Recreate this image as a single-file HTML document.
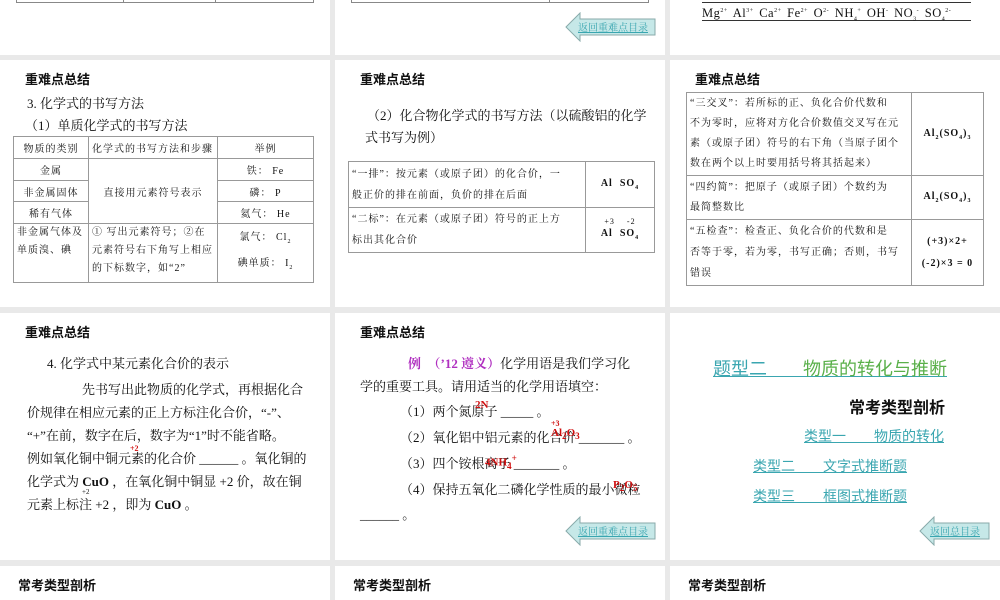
<!DOCTYPE html>
<html><head><meta charset="utf-8"><style>
body{margin:0;width:1000px;height:600px;background:#e9e9e9;position:relative;overflow:hidden;font-family:"Liberation Serif","Noto Serif CJK SC",serif;color:#111}
.s{position:absolute;background:#fff;overflow:hidden}
.a{position:absolute;white-space:nowrap}
.h{font-family:"Liberation Sans","Noto Sans CJK SC",sans-serif;font-weight:bold;font-size:13px}
.t13{font-size:13px}
table{position:absolute;border-collapse:collapse;font-size:10px;font-family:"Liberation Serif","Noto Serif CJK SC",serif}
td{border:1px solid #999;padding:0 3px;vertical-align:middle;white-space:nowrap}
.ls{letter-spacing:1px}
.red{color:#d01010;font-weight:bold}
.lk{color:#3aa6b0;text-decoration:underline}
</style></head><body>

<!-- top row -->
<div class="s" style="left:0;top:0;width:330px;height:55px">
 <div class="a" style="left:16px;top:0;width:297px;height:2px;border-bottom:1px solid #888"></div>
 <div class="a" style="left:16px;top:0;width:0;height:3px;border-left:1px solid #888"></div>
 <div class="a" style="left:123px;top:0;height:3px;border-left:1px solid #888"></div>
 <div class="a" style="left:215px;top:0;height:3px;border-left:1px solid #888"></div>
 <div class="a" style="left:313px;top:0;height:3px;border-left:1px solid #888"></div>
</div>
<div class="s" style="left:335px;top:0;width:330px;height:55px">
 <div class="a" style="left:16px;top:0;width:297px;height:2px;border-bottom:1px solid #888"></div>
 <div class="a" style="left:16px;top:0;height:3px;border-left:1px solid #888"></div>
 <div class="a" style="left:214px;top:0;height:3px;border-left:1px solid #888"></div>
 <div class="a" style="left:313px;top:0;height:3px;border-left:1px solid #888"></div>
 <svg class="a" style="left:230px;top:12px" width="92" height="30"><polygon points="1,15 15,1 15,7 90,7 90,23 15,23 15,29" fill="#c6e8e8" stroke="#8aa" stroke-width="1"/></svg>
 <div class="a lk" style="left:243px;top:19px;font-size:10px">返回重难点目录</div>
</div>
<div class="s" style="left:670px;top:0;width:330px;height:55px">
 <div class="a" style="left:32px;top:2px;width:269px;height:17px;border-top:1px solid #333;border-bottom:1px solid #333;font-size:12.5px;line-height:17px;letter-spacing:0.5px;word-spacing:2px">Mg<sup style="font-size:6px">2+</sup> Al<sup style="font-size:6px">3+</sup> Ca<sup style="font-size:6px">2+</sup> Fe<sup style="font-size:6px">2+</sup> O<sup style="font-size:6px">2-</sup> NH<sub style="font-size:6px">4</sub><sup style="font-size:6px">+</sup> OH<sup style="font-size:6px">-</sup> NO<sub style="font-size:6px">3</sub><sup style="font-size:6px">-</sup> SO<sub style="font-size:6px">4</sub><sup style="font-size:6px">2-</sup></div>
</div>

<!-- row 2 -->
<div class="s" style="left:0;top:60px;width:330px;height:247px">
 <div class="a h" style="left:25px;top:9px">重难点总结</div>
 <div class="a t13" style="left:27px;top:33px">3. 化学式的书写方法</div>
 <div class="a t13" style="left:25px;top:55px">（1）单质化学式的书写方法</div>
 <table class="ls" style="left:13px;top:76px;width:301px">
  <tr style="height:22px"><td style="width:68px;text-align:center">物质的类别</td><td style="width:122px">化学式的书写方法和步骤</td><td style="text-align:center">举例</td></tr>
  <tr style="height:22px"><td style="text-align:center">金属</td><td rowspan="3" style="text-align:center">直接用元素符号表示</td><td style="text-align:center">铁：&nbsp;Fe</td></tr>
  <tr style="height:21px"><td style="text-align:center">非金属固体</td><td style="text-align:center">磷：&nbsp;P</td></tr>
  <tr style="height:22px"><td style="text-align:center">稀有气体</td><td style="text-align:center">氦气：&nbsp;He</td></tr>
  <tr style="height:59px"><td style="line-height:18px;vertical-align:top">非金属气体及<br>单质溴、碘</td><td style="line-height:18px;vertical-align:top">① 写出元素符号；②在<br>元素符号右下角写上相应<br>的下标数字，如“2”</td><td style="text-align:center;line-height:22px">氯气：&nbsp;Cl<sub style="font-size:6px">2</sub><br>碘单质：&nbsp;I<sub style="font-size:6px">2</sub></td></tr>
 </table>
</div>
<div class="s" style="left:335px;top:60px;width:330px;height:247px">
 <div class="a h" style="left:25px;top:9px">重难点总结</div>
 <div class="a t13" style="left:32px;top:45px">（2）化合物化学式的书写方法（以硫酸铝的化学</div>
 <div class="a t13" style="left:30px;top:67px">式书写为例）</div>
 <table class="ls" style="left:13px;top:101px;width:307px">
  <tr style="height:46px"><td style="width:230px;line-height:21px">“一排”：按元素（或原子团）的化合价，一<br>般正价的排在前面，负价的排在后面</td><td style="text-align:center;font-weight:bold">Al&nbsp;&nbsp;SO<sub style="font-size:6px">4</sub></td></tr>
  <tr style="height:45px"><td style="line-height:21px">“二标”：在元素（或原子团）符号的正上方<br>标出其化合价</td><td style="text-align:center;font-weight:bold;line-height:12px"><span style="font-size:8px;font-weight:normal">+3&nbsp;&nbsp;&nbsp;&nbsp;-2</span><br>Al&nbsp;&nbsp;SO<sub style="font-size:6px">4</sub></td></tr>
 </table>
</div>
<div class="s" style="left:670px;top:60px;width:330px;height:247px">
 <div class="a h" style="left:25px;top:9px">重难点总结</div>
 <table class="ls" style="left:16px;top:32px;width:298px">
  <tr style="height:83px"><td style="width:218px;line-height:20px">“三交叉”：若所标的正、负化合价代数和<br>不为零时，应将对方化合价数值交叉写在元<br>素（或原子团）符号的右下角（当原子团个<br>数在两个以上时要用括号将其括起来）</td><td style="text-align:center;font-weight:bold">Al<sub style="font-size:6px">2</sub>(SO<sub style="font-size:6px">4</sub>)<sub style="font-size:6px">3</sub></td></tr>
  <tr style="height:44px"><td style="line-height:20px">“四约简”：把原子（或原子团）个数约为<br>最简整数比</td><td style="text-align:center;font-weight:bold">Al<sub style="font-size:6px">2</sub>(SO<sub style="font-size:6px">4</sub>)<sub style="font-size:6px">3</sub></td></tr>
  <tr style="height:66px"><td style="line-height:21px">“五检查”：检查正、负化合价的代数和是<br>否等于零，若为零，书写正确；否则，书写<br>错误</td><td style="text-align:center;font-weight:bold;line-height:22px">(+3)×2+<br>(-2)×3 = 0</td></tr>
 </table>
</div>

<!-- row 3 -->
<div class="s" style="left:0;top:313px;width:330px;height:247px">
 <div class="a h" style="left:25px;top:9px">重难点总结</div>
 <div class="a t13" style="left:47px;top:40px">4. 化学式中某元素化合价的表示</div>
 <div class="a t13" style="left:82px;top:66px">先书写出此物质的化学式，再根据化合</div>
 <div class="a t13" style="left:27px;top:89px">价规律在相应元素的正上方标注化合价，“-”、</div>
 <div class="a t13" style="left:27px;top:112px">“+”在前，数字在后，数字为“1”时不能省略。</div>
 <div class="a t13" style="left:27px;top:135px">例如氧化铜中铜元素的化合价 ______ 。氧化铜的</div>
 <div class="a t13" style="left:27px;top:158px">化学式为 <b>CuO</b> ，在氧化铜中铜显 +2 价，故在铜</div>
 <div class="a t13" style="left:27px;top:181px">元素上标注 +2 ，即为 <b>CuO</b> 。</div>
 <div class="a red" style="left:130px;top:131px;font-size:8px">+2</div>
 <div class="a" style="left:82px;top:175px;font-size:7px">+2</div>
</div>
<div class="s" style="left:335px;top:313px;width:330px;height:247px">
 <div class="a h" style="left:25px;top:9px">重难点总结</div>
 <div class="a t13" style="left:73px;top:40px"><span style="color:#b030c0;font-weight:bold">例　（’12 遵义）</span>化学用语是我们学习化</div>
 <div class="a t13" style="left:25px;top:63px">学的重要工具。请用适当的化学用语填空：</div>
 <div class="a t13" style="left:65px;top:88px">（1）两个氮原子 _____ 。</div>
 <div class="a t13" style="left:65px;top:114px">（2）氧化铝中铝元素的化合价 _______ 。</div>
 <div class="a t13" style="left:65px;top:140px">（3）四个铵根离子 _______ 。</div>
 <div class="a t13" style="left:65px;top:166px">（4）保持五氧化二磷化学性质的最小微粒</div>
 <div class="a t13" style="left:25px;top:191px">______ 。</div>
 <div class="a red" style="left:140px;top:86px;font-size:11px">2N</div>
 <div class="a red" style="left:216px;top:106px;font-size:8px">+3</div>
 <div class="a red" style="left:216px;top:114px;font-size:11px">Al<sub>2</sub>O<sub>3</sub></div>
 <div class="a red" style="left:150px;top:140px;font-size:11px">4NH<sub>4</sub><sup>+</sup></div>
 <div class="a red" style="left:278px;top:166px;font-size:11px">P<sub>2</sub>O<sub>5</sub></div>
 <svg class="a" style="left:230px;top:203px" width="92" height="30"><polygon points="1,15 15,1 15,7 90,7 90,23 15,23 15,29" fill="#c6e8e8" stroke="#8aa" stroke-width="1"/></svg>
 <div class="a lk" style="left:243px;top:210px;font-size:10px">返回重难点目录</div>
</div>
<div class="s" style="left:670px;top:313px;width:330px;height:247px">
 <div class="a" style="left:43px;top:42px;font-size:18px;color:#3aa6b0;text-decoration:underline;font-family:'Liberation Sans','Noto Sans CJK SC',sans-serif">题型二　　<span style="color:#5ab04a">物质的转化与推断</span></div>
 <div class="a" style="left:179px;top:81px;font-size:16px;font-weight:bold;font-family:'Liberation Sans','Noto Sans CJK SC',sans-serif">常考类型剖析</div>
 <div class="a lk" style="left:134px;top:113px;font-size:14px;font-family:'Liberation Sans','Noto Sans CJK SC',sans-serif">类型一　　物质的转化</div>
 <div class="a lk" style="left:83px;top:143px;font-size:14px;font-family:'Liberation Sans','Noto Sans CJK SC',sans-serif">类型二　　文字式推断题</div>
 <div class="a lk" style="left:83px;top:173px;font-size:14px;font-family:'Liberation Sans','Noto Sans CJK SC',sans-serif">类型三　　框图式推断题</div>
 <svg class="a" style="left:249px;top:203px" width="72" height="30"><polygon points="1,15 15,1 15,7 70,7 70,23 15,23 15,29" fill="#c6e8e8" stroke="#8aa" stroke-width="1"/></svg>
 <div class="a lk" style="left:260px;top:210px;font-size:10px">返回总目录</div>
</div>

<!-- row 4 -->
<div class="s" style="left:0;top:566px;width:330px;height:34px"><div class="a h" style="left:18px;top:9px">常考类型剖析</div></div>
<div class="s" style="left:335px;top:566px;width:330px;height:34px"><div class="a h" style="left:18px;top:9px">常考类型剖析</div></div>
<div class="s" style="left:670px;top:566px;width:330px;height:34px"><div class="a h" style="left:18px;top:9px">常考类型剖析</div></div>
</body></html>
